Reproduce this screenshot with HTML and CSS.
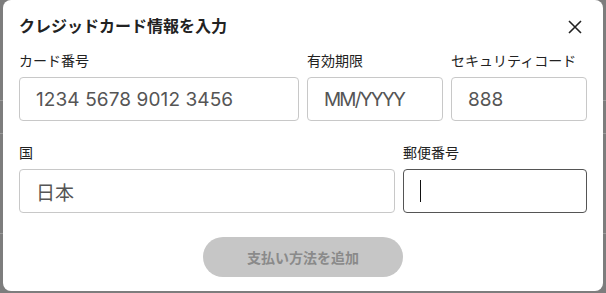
FILE: index.html
```html
<!DOCTYPE html>
<html lang="ja">
<head>
<meta charset="utf-8">
<link rel="stylesheet" href="styles.css">
</head>
<body>
<div class="backdrop">
  <div class="line l1"></div>
  <div class="line l2"></div>
  <div class="line l3"></div>
  <div class="modal">
    <div class="header">
      <h1 class="title">クレジッドカード情報を入力</h1>
      <svg class="close" width="16" height="16" viewBox="0 0 16 16"><path d="M2 2 L14 14 M14 2 L2 14" stroke="#222" stroke-width="1.6" fill="none"/></svg>
    </div>
    <div class="row row1">
      <div class="field">
        <div class="label">カード番号</div>
        <div class="input wide">1234 5678 9012 3456</div>
      </div>
      <div class="field">
        <div class="label">有効期限</div>
        <div class="input tight">MM/YYYY</div>
      </div>
      <div class="field">
        <div class="label">セキュリティコード</div>
        <div class="input">888</div>
      </div>
    </div>
    <div class="row row2">
      <div class="field">
        <div class="label">国</div>
        <div class="input">日本</div>
      </div>
      <div class="field">
        <div class="label">郵便番号</div>
        <div class="input focused"><span class="caret"></span></div>
      </div>
    </div>
    <div class="actions">
      <button class="submit">支払い方法を追加</button>
    </div>
  </div>
</div>
</body>
</html>
```
FILE: styles.css
```css
html, body {
  margin: 0;
  padding: 0;
}
body {
  width: 606px;
  height: 293px;
  overflow: hidden;
  background: #7d7d7d;
  font-family: "Noto Sans", "Noto Sans CJK JP", sans-serif;
}
.backdrop {
  position: relative;
  height: 293px;
  padding: 0 3px;
  box-sizing: border-box;
}
.line {
  position: absolute;
  left: 0;
  right: 0;
  height: 1px;
  background: #9a9a9a;
}
.l1 { top: 100px; }
.l2 { top: 133px; }
.l3 { top: 233px; }
.modal {
  position: relative;
  height: 291px;
  background: #fff;
  border-radius: 8px;
  padding: 0 16px;
  box-sizing: border-box;
  display: flex;
  flex-direction: column;
}
.header {
  display: flex;
  align-items: center;
  justify-content: space-between;
  height: 24px;
  padding-top: 14px;
}
.title {
  margin: 0;
  font-size: 16px;
  font-weight: 600;
  color: #222;
  line-height: 24px;
}
.close {
  margin-right: 4px;
  margin-top: 2px;
}
.row {
  display: grid;
  column-gap: 8px;
}
.row1 {
  margin-top: 14px;
  grid-template-columns: 280px 136px 136px;
}
.row2 {
  margin-top: 23px;
  grid-template-columns: 376px 184px;
}
.label {
  font-size: 14px;
  line-height: 18px;
  color: #222;
  margin-bottom: 7px;
  white-space: nowrap;
}
.input {
  height: 44px;
  box-sizing: border-box;
  border: 1px solid #c8c8c8;
  border-radius: 4px;
  padding: 0 16px;
  display: flex;
  align-items: center;
  font-family: "Inter", "Noto Sans CJK JP", sans-serif;
  font-size: 19px;
  font-weight: 400;
  color: #555;
}
.wide {
  letter-spacing: 0.1px;
}
.tight {
  letter-spacing: -1.8px;
}
.focused {
  border-color: #555;
}
.caret {
  display: block;
  width: 1px;
  height: 22px;
  background: #111;
}
.actions {
  display: flex;
  justify-content: center;
  margin-top: 24px;
}
.submit {
  width: 200px;
  height: 40px;
  border: none;
  border-radius: 20px;
  background: #c6c6c6;
  color: #8a8a8a;
  font-family: "Noto Sans CJK JP", sans-serif;
  font-size: 14px;
  font-weight: 700;
}
```
